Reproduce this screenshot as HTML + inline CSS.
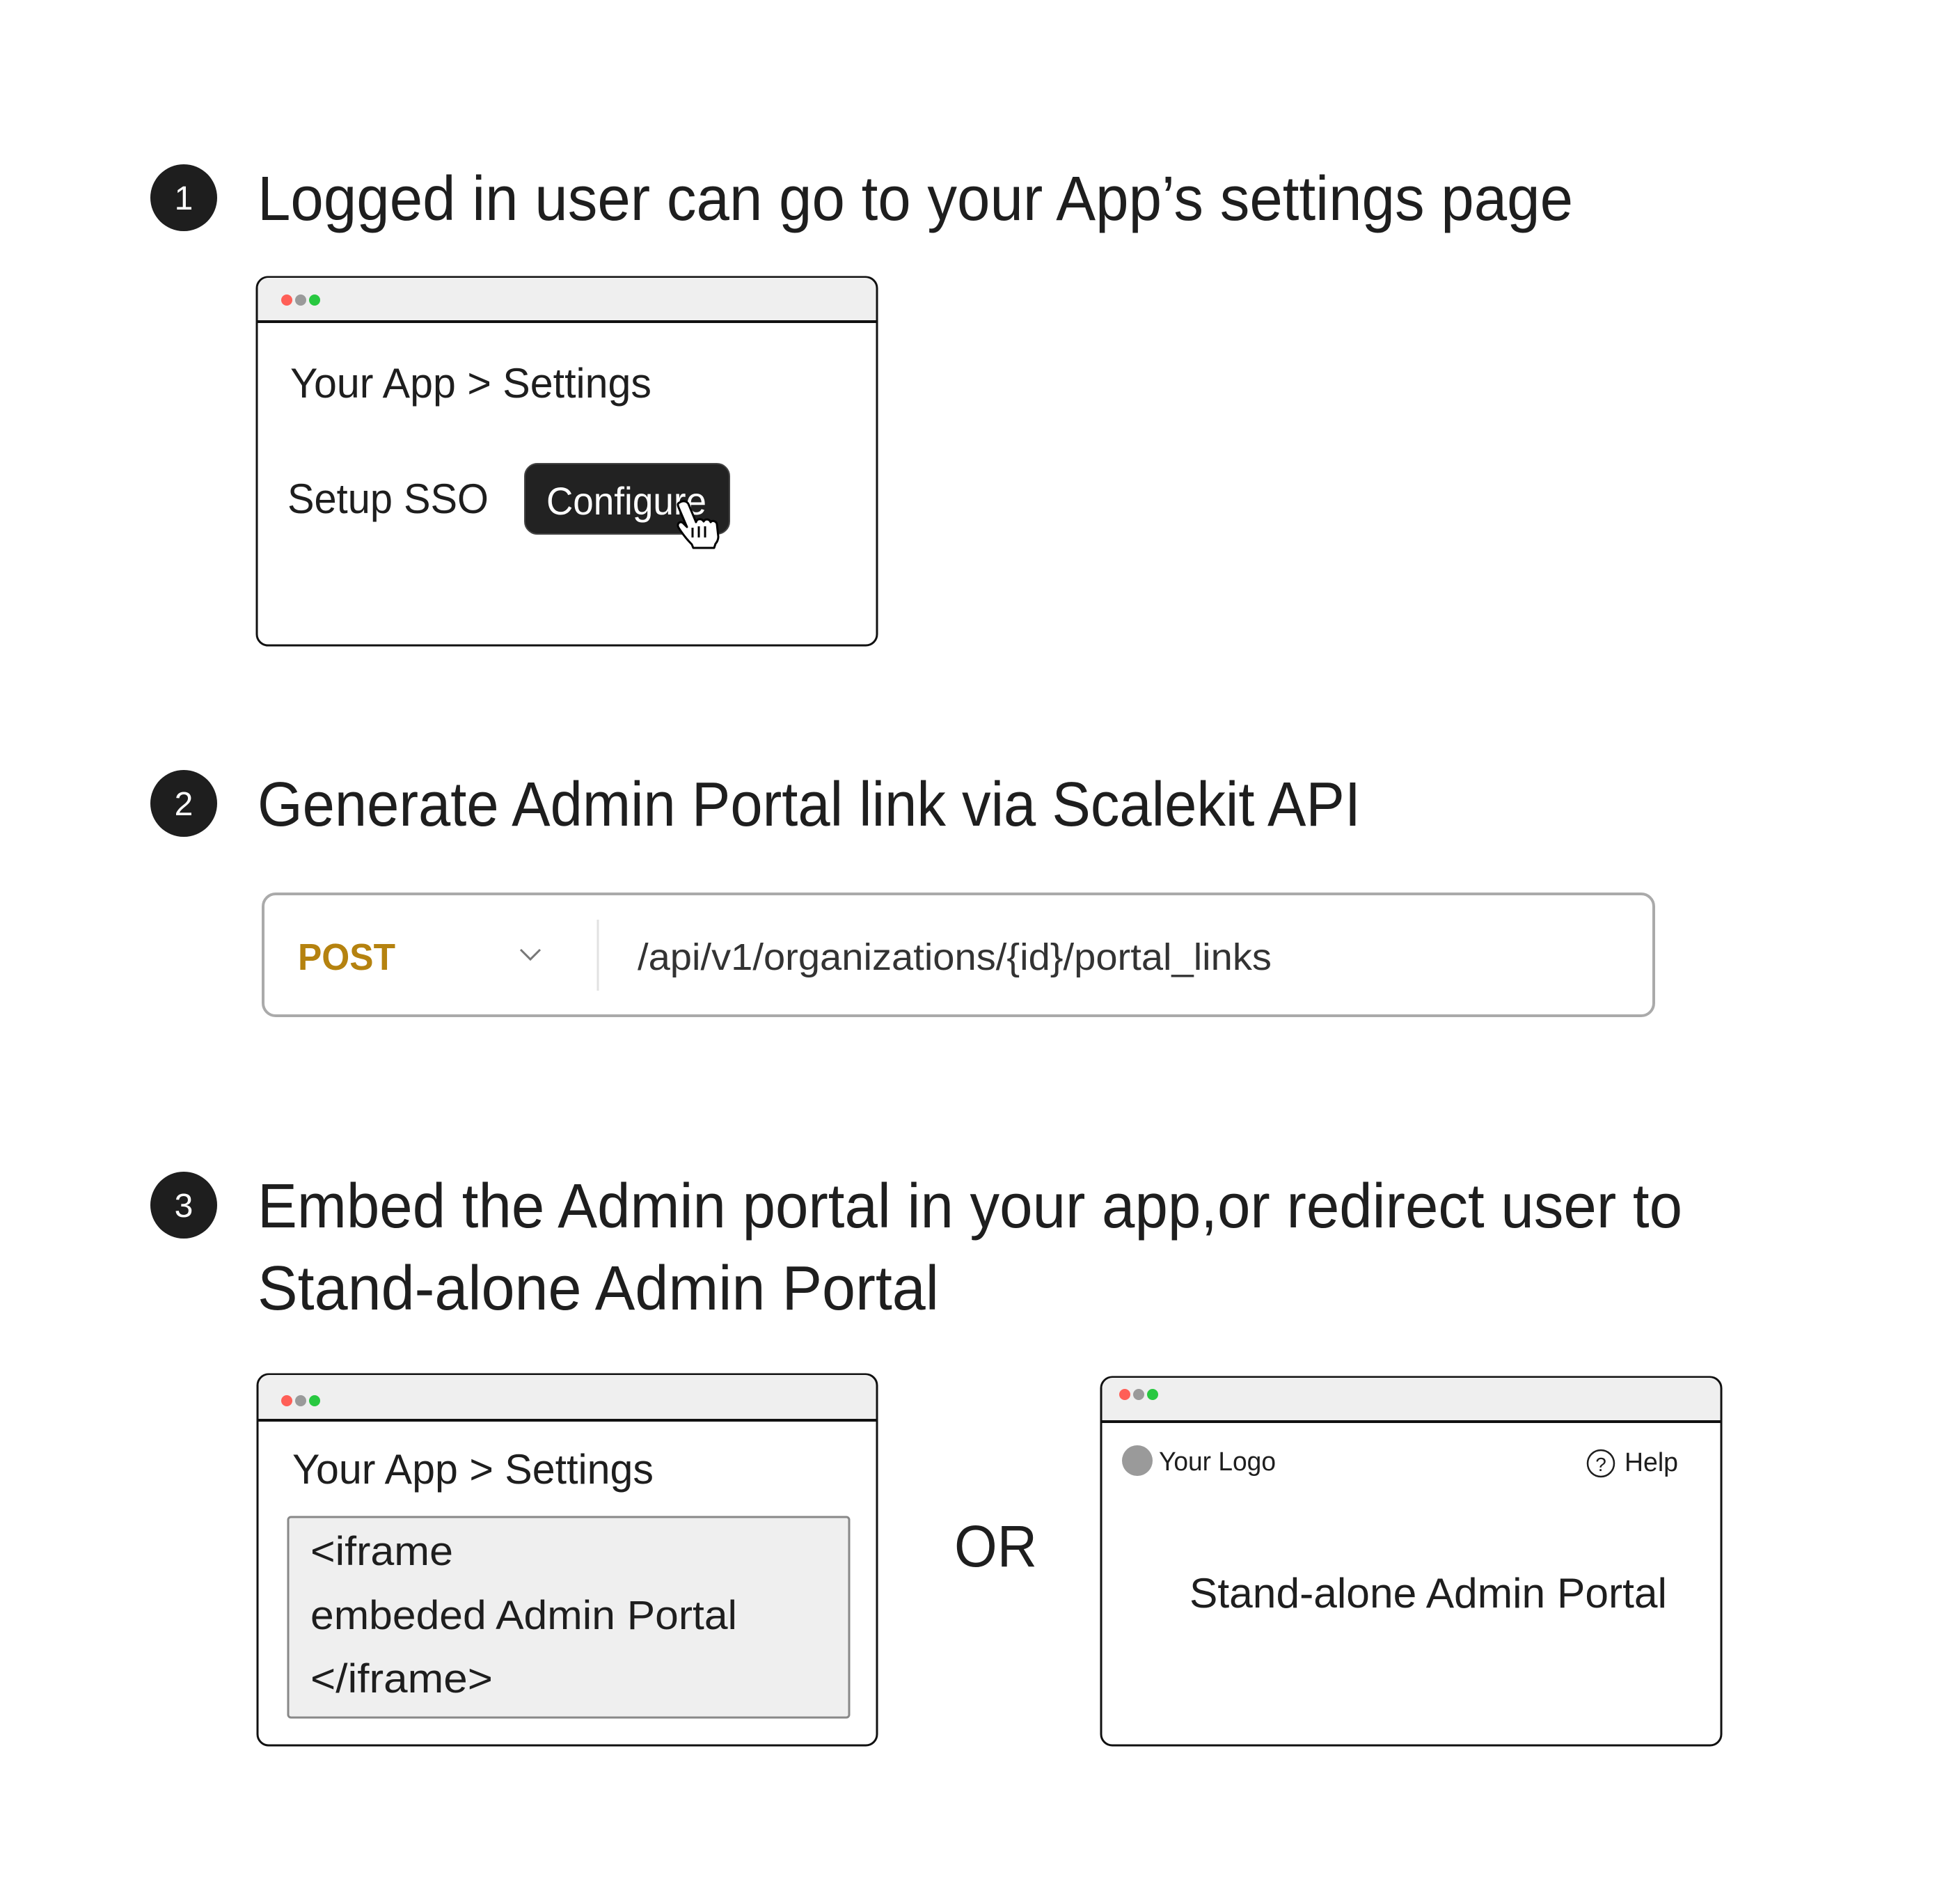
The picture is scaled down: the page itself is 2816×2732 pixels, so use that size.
<!DOCTYPE html>
<html><head><meta charset="utf-8"><style>html,body{margin:0;padding:0;background:#fff}svg{display:block}text{font-family:"Liberation Sans",sans-serif;fill:#1e1e1e}</style></head>
<body>
<svg width="2816" height="2732" viewBox="0 0 2816 2732" xmlns="http://www.w3.org/2000/svg">
<rect width="2816" height="2732" fill="#fff"/>
<!-- Step 1 -->
<circle cx="264" cy="284" r="48" fill="#1e1e1e"/>
<text x="264" y="301" font-size="48" text-anchor="middle" style="fill:#fff">1</text>
<text x="370" y="316" font-size="90" textLength="1890" lengthAdjust="spacingAndGlyphs">Logged in user can go to your App’s settings page</text>
<rect x="369" y="398" width="891" height="529" rx="16" fill="#fff" stroke="#111" stroke-width="3"/>
<path d="M370.5 462 V414 a15 15 0 0 1 15 -15 H1243 a15 15 0 0 1 15 15 V462 Z" fill="#efefef"/>
<line x1="369" y1="462" x2="1260" y2="462" stroke="#111" stroke-width="4"/>
<circle cx="412" cy="431" r="8" fill="#ff5f57"/><circle cx="432" cy="431" r="8" fill="#9a9a9a"/><circle cx="452" cy="431" r="8" fill="#28c840"/>
<text x="417" y="571" font-size="60" textLength="519" lengthAdjust="spacingAndGlyphs">Your App &gt; Settings</text>
<text x="413" y="737" font-size="60" textLength="289" lengthAdjust="spacingAndGlyphs">Setup SSO</text>
<rect x="754" y="666" width="294" height="101" rx="18" fill="#222" stroke="#444" stroke-width="2"/>
<text x="785" y="739" font-size="56" textLength="230" lengthAdjust="spacingAndGlyphs" style="fill:#fff">Configure</text>
<path d="M976 722 c6-4 12-2 14 4 l10 24 c1-5 8-6 11-1 c2-4 8-4 10 1 c2-3 8-2 9 3 l2 18 c0 4 -2 8 -4 10 l-2 6 h-30 l-2-5 c-6-6-14-16-19-24 c-3-5 1-10 6-7 l6 6 l-12-28 c-2-5 -1-6 1-7z" fill="#fff" stroke="#000" stroke-width="3" stroke-linejoin="round"/>
<path d="M995 758 v14 M1004 756 v16 M1013 756 v16" stroke="#000" stroke-width="3"/>
<!-- Step 2 -->
<circle cx="264" cy="1154" r="48" fill="#1e1e1e"/>
<text x="264" y="1171" font-size="48" text-anchor="middle" style="fill:#fff">2</text>
<text x="370" y="1186" font-size="90" textLength="1585" lengthAdjust="spacingAndGlyphs">Generate Admin Portal link via Scalekit API</text>
<rect x="378" y="1284" width="1998" height="175" rx="18" fill="#fff" stroke="#aaa" stroke-width="4"/>
<text x="428" y="1393" font-size="54" font-weight="bold" textLength="140" lengthAdjust="spacingAndGlyphs" style="fill:#b5820f">POST</text>
<path d="M748 1364 l14 14 l14 -14" fill="none" stroke="#777" stroke-width="3"/>
<line x1="859" y1="1321" x2="859" y2="1423" stroke="#e2e2e2" stroke-width="3"/>
<text x="916" y="1393" font-size="54" textLength="911" lengthAdjust="spacingAndGlyphs" style="fill:#333">/api/v1/organizations/{id}/portal_links</text>
<!-- Step 3 -->
<circle cx="264" cy="1731" r="48" fill="#1e1e1e"/>
<text x="264" y="1748" font-size="48" text-anchor="middle" style="fill:#fff">3</text>
<text x="370" y="1763" font-size="90" textLength="2047" lengthAdjust="spacingAndGlyphs">Embed the Admin portal in your app,or redirect user to</text>
<text x="370" y="1881" font-size="90" textLength="979" lengthAdjust="spacingAndGlyphs">Stand-alone Admin Portal</text>
<!-- Left window -->
<rect x="370" y="1974" width="890" height="533" rx="16" fill="#fff" stroke="#111" stroke-width="3"/>
<path d="M371.5 2040 V1990 a15 15 0 0 1 15 -15 H1243 a15 15 0 0 1 15 15 V2040 Z" fill="#efefef"/>
<line x1="370" y1="2040" x2="1260" y2="2040" stroke="#111" stroke-width="4"/>
<circle cx="412" cy="2012" r="8" fill="#ff5f57"/><circle cx="432" cy="2012" r="8" fill="#9a9a9a"/><circle cx="452" cy="2012" r="8" fill="#28c840"/>
<text x="420" y="2131" font-size="60" textLength="519" lengthAdjust="spacingAndGlyphs">Your App &gt; Settings</text>
<rect x="414" y="2179" width="806" height="288" rx="4" fill="#efefef" stroke="#888" stroke-width="3"/>
<text x="446" y="2248" font-size="58" textLength="205" lengthAdjust="spacingAndGlyphs">&lt;iframe</text>
<text x="446" y="2340" font-size="58" textLength="613" lengthAdjust="spacingAndGlyphs">embeded Admin Portal</text>
<text x="446" y="2431" font-size="58" textLength="262" lengthAdjust="spacingAndGlyphs">&lt;/iframe&gt;</text>
<text x="1371" y="2250" font-size="84" textLength="119" lengthAdjust="spacingAndGlyphs">OR</text>
<!-- Right window -->
<rect x="1582" y="1978" width="891" height="529" rx="16" fill="#fff" stroke="#111" stroke-width="3"/>
<path d="M1583.5 2042 V1994 a15 15 0 0 1 15 -15 H2456 a15 15 0 0 1 15 15 V2042 Z" fill="#efefef"/>
<line x1="1582" y1="2042" x2="2473" y2="2042" stroke="#111" stroke-width="4"/>
<circle cx="1616" cy="2003" r="8" fill="#ff5f57"/><circle cx="1636" cy="2003" r="8" fill="#9a9a9a"/><circle cx="1656" cy="2003" r="8" fill="#28c840"/>
<circle cx="1634" cy="2098" r="22" fill="#9a9a9a"/>
<text x="1665" y="2112" font-size="38" textLength="168" lengthAdjust="spacingAndGlyphs">Your Logo</text>
<circle cx="2300" cy="2102" r="19" fill="none" stroke="#1e1e1e" stroke-width="2.5"/>
<text x="2300" y="2113" font-size="28" text-anchor="middle">?</text>
<text x="2334" y="2113" font-size="38" textLength="77" lengthAdjust="spacingAndGlyphs">Help</text>
<text x="1709" y="2309" font-size="60" textLength="686" lengthAdjust="spacingAndGlyphs">Stand-alone Admin Portal</text>
</svg>
</body></html>
